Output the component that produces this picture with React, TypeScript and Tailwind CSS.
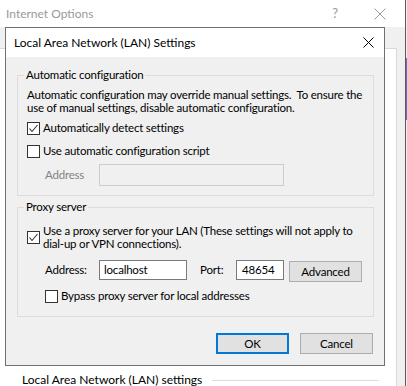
import React from "react";

function CheckBox({ checked }: { checked?: boolean }) {
  return (
    <div className="w-[13px] h-[13px] shrink-0 border border-[#333333] bg-white flex items-center justify-center">
      {checked && (
        <svg width="11" height="11" viewBox="0 0 11 11">
          <path d="M1.5 5.5 L4 8.5 L9.5 2" fill="none" stroke="#333333" strokeWidth="1.1" />
        </svg>
      )}
    </div>
  );
}

function CloseIcon({ size, color }: { size: number; color: string }) {
  return (
    <svg width={size} height={size} viewBox={`0 0 ${size} ${size}`}>
      <path d={`M0.5 0.5 L${size - 0.5} ${size - 0.5} M${size - 0.5} 0.5 L0.5 ${size - 0.5}`} stroke={color} strokeWidth="1" fill="none" />
    </svg>
  );
}

function Button({ label, primary }: { label: string; primary?: boolean }) {
  return (
    <div
      className={`w-[73px] h-[21px] flex items-center justify-center bg-[#e1e1e1] text-black ${
        primary ? "border-2 border-[#0078d7]" : "border border-[#adadad]"
      }`}
    >
      {label}
    </div>
  );
}

export default function App() {
  return (
    <div className="w-[407px] h-[386px] relative overflow-hidden flex bg-white font-['Lato',sans-serif] text-[12px] text-black">
      {/* Internet Options window behind */}
      <div className="w-[406px] h-full flex flex-col border-r border-[#5a5a5a]">
        <div className="h-[27px] shrink-0 bg-white flex items-center text-[#9a9a9a]">
          <span className="pl-[6px]">Internet Options</span>
          <span className="ml-auto text-[13px] mr-[36px]">?</span>
          <div className="mr-[19px]">
            <CloseIcon size={12} color="#9a9a9a" />
          </div>
        </div>
        <div className="flex-1 flex flex-col bg-[#f0f0f0] pt-[21px]">
          <div className="w-[397px] flex-1 flex flex-col justify-end bg-white border-t border-r border-[#d9d9d9]">
            <div className="h-[14px] mb-[-1px] flex items-center pl-[22px]">
              <span className="whitespace-nowrap">Local Area Network (LAN) settings</span>
              <div className="flex-1 h-px bg-[#dcdcdc] ml-[10px] mr-[17px]" />
            </div>
          </div>
        </div>
      </div>
      <div className="flex-1 bg-[#f0f0f0]">
        <div className="mt-[58px] h-[62px] bg-[#6c6bc4]" />
      </div>

      {/* LAN Settings dialog */}
      <div className="absolute left-[5px] top-[27px] w-[380px] h-[339px] border border-[#707070] flex flex-col">
        <div className="h-[29px] shrink-0 bg-white flex items-center pl-[8px] pr-[10px]">
          <span>Local Area Network (LAN) Settings</span>
          <div className="ml-auto">
            <CloseIcon size={11} color="#000000" />
          </div>
        </div>
        <div className="flex-1 bg-[#f0f0f0] pl-[11px] pr-[10px] pt-[11px] flex flex-col text-[11.5px] tracking-[-0.2px]">
          <fieldset className="min-w-0 border border-[#dcdcdc]">
            <legend className="ml-[6px] px-[2px] leading-[14px]">Automatic configuration</legend>
            <div className="pl-[9px] pt-[6px] pb-[9px]">
              <p className="leading-[13px] whitespace-nowrap">
                Automatic configuration may override manual settings.{"\u00a0 "}To ensure the
                <br />
                use of manual settings, disable automatic configuration.
              </p>
              <div className="mt-[6px] h-[16px] flex items-center">
                <CheckBox checked />
                <span className="ml-[3px]">Automatically detect settings</span>
              </div>
              <div className="mt-[7px] h-[16px] flex items-center">
                <CheckBox />
                <span className="ml-[3px]">Use automatic configuration script</span>
              </div>
              <div className="mt-[5px] h-[22px] flex items-center ml-[18px]">
                <span className="w-[54px] text-[#838383]">Address</span>
                <div className="w-[185px] h-[22px] border border-[#cccccc] bg-[#f0f0f0]" />
              </div>
            </div>
          </fieldset>

          <fieldset className="min-w-0 mt-[4px] border border-[#dcdcdc]">
            <legend className="ml-[6px] px-[2px] leading-[14px]">Proxy server</legend>
            <div className="pl-[9px] pt-[10px] pb-[12px]">
              <div className="flex items-center">
                <CheckBox checked />
                <p className="ml-[3px] leading-[13px] whitespace-nowrap">
                  Use a proxy server for your LAN (These settings will not apply to
                  <br />
                  dial-up or VPN connections).
                </p>
              </div>
              <div className="mt-[10px] flex items-start ml-[18px]">
                <span className="w-[54px] h-[20px] flex items-center">Address:</span>
                <div className="w-[88px] h-[20px] border border-[#7a7a7a] bg-white flex items-center pl-[4px]">
                  localhost
                </div>
                <span className="ml-[13px] w-[36px] h-[20px] flex items-center">Port:</span>
                <div className="w-[48px] h-[20px] border border-[#7a7a7a] bg-white flex items-center pl-[5px]">
                  48654
                </div>
                <div className="ml-[5px] mt-[1px] w-[73px] h-[21px] flex items-center justify-center bg-[#e1e1e1] border border-[#adadad]">
                  Advanced
                </div>
              </div>
              <div className="mt-[6px] h-[16px] flex items-center ml-[18px]">
                <CheckBox />
                <span className="ml-[3px]">Bypass proxy server for local addresses</span>
              </div>
            </div>
          </fieldset>

          <div className="mt-[16px] flex justify-end gap-[11px] pr-[1px]">
            <Button label="OK" primary />
            <Button label="Cancel" />
          </div>
        </div>
      </div>
    </div>
  );
}
